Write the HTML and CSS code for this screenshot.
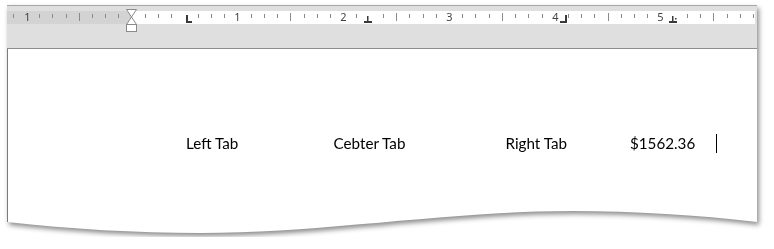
FILE: index.html
```html
<!DOCTYPE html>
<html lang="en">
<head>
    <meta charset="utf-8" />
    <meta name="viewport" content="width=device-width, initial-scale=1.0">
    <link rel="stylesheet" href="styles.css">
    <title>Tab Stops</title>
</head>
<body>
    <div class="doc">
        <div class="doc-header">
            <svg class="ruler" viewBox="7 11 748 13" width="748" height="13">
                <rect class="ruler-margin" x="7" y="11" width="125" height="13"/>
                <g class="ticks">
                    <rect x="13" y="14" width="1" height="4"/>
                    <rect x="39" y="14" width="1" height="4"/>
                    <rect x="52" y="14" width="1" height="4"/>
                    <rect x="66" y="14" width="1" height="4"/>
                    <rect x="79" y="13" width="1" height="8"/>
                    <rect x="92" y="14" width="1" height="4"/>
                    <rect x="105" y="14" width="1" height="4"/>
                    <rect x="118" y="14" width="1" height="4"/>
                    <rect x="145" y="14" width="1" height="4"/>
                    <rect x="158" y="14" width="1" height="4"/>
                    <rect x="171" y="14" width="1" height="4"/>
                    <rect x="198" y="14" width="1" height="4"/>
                    <rect x="211" y="14" width="1" height="4"/>
                    <rect x="224" y="14" width="1" height="4"/>
                    <rect x="251" y="14" width="1" height="4"/>
                    <rect x="264" y="14" width="1" height="4"/>
                    <rect x="277" y="14" width="1" height="4"/>
                    <rect x="290" y="13" width="1" height="8"/>
                    <rect x="304" y="14" width="1" height="4"/>
                    <rect x="317" y="14" width="1" height="4"/>
                    <rect x="330" y="14" width="1" height="4"/>
                    <rect x="356" y="14" width="1" height="4"/>
                    <rect x="383" y="14" width="1" height="4"/>
                    <rect x="396" y="13" width="1" height="8"/>
                    <rect x="409" y="14" width="1" height="4"/>
                    <rect x="423" y="14" width="1" height="4"/>
                    <rect x="436" y="14" width="1" height="4"/>
                    <rect x="462" y="14" width="1" height="4"/>
                    <rect x="475" y="14" width="1" height="4"/>
                    <rect x="489" y="14" width="1" height="4"/>
                    <rect x="502" y="13" width="1" height="8"/>
                    <rect x="515" y="14" width="1" height="4"/>
                    <rect x="528" y="14" width="1" height="4"/>
                    <rect x="542" y="14" width="1" height="4"/>
                    <rect x="568" y="14" width="1" height="4"/>
                    <rect x="581" y="14" width="1" height="4"/>
                    <rect x="594" y="14" width="1" height="4"/>
                    <rect x="608" y="13" width="1" height="8"/>
                    <rect x="621" y="14" width="1" height="4"/>
                    <rect x="634" y="14" width="1" height="4"/>
                    <rect x="647" y="14" width="1" height="4"/>
                    <rect x="687" y="14" width="1" height="4"/>
                    <rect x="700" y="14" width="1" height="4"/>
                    <rect x="713" y="13" width="1" height="8"/>
                    <rect x="727" y="14" width="1" height="4"/>
                    <rect x="740" y="14" width="1" height="4"/>
                    <rect x="753" y="14" width="1" height="4"/>
                </g>
                <g class="nums">
                    <text x="27.5" y="21">1</text>
                    <text x="237.5" y="21">1</text>
                    <text x="343.5" y="21">2</text>
                    <text x="449.5" y="21">3</text>
                    <text x="555.5" y="21">4</text>
                    <text x="660.5" y="21">5</text>
                </g>
                <g class="tabs">
                    <!-- left -->
                    <rect x="186" y="15" width="2" height="8"/>
                    <rect x="186" y="21" width="6" height="2"/>
                    <!-- center -->
                    <rect x="367" y="16" width="1.5" height="6"/>
                    <rect x="364" y="21" width="8" height="2"/>
                    <!-- right -->
                    <rect x="565" y="15" width="2" height="8"/>
                    <rect x="560" y="21" width="7" height="2"/>
                    <!-- decimal -->
                    <rect x="672" y="16" width="1.5" height="6"/>
                    <rect x="669" y="21" width="8" height="2"/>
                    <rect x="675" y="18" width="1.5" height="1.5"/>
                </g>
                <g class="indent">
                    <polygon points="126.5,9.5 136.5,9.5 131.5,17"/>
                    <polygon points="131.5,17 136.5,24.5 126.5,24.5"/>
                    <rect x="126.5" y="24.5" width="10" height="7"/>
                </g>
            </svg>
        </div>

        <div class="page">
            <div class="line">
                <span class="gap"></span>
                <span class="c-left">Left Tab</span>
                <span class="c-center">Cebter Tab</span>
                <span class="c-right">Right Tab</span>
                <span class="c-int">$1562</span>
                <span class="c-frac">.36</span>
                <span class="caret"></span>
            </div>
        </div>

        <svg class="page-edge" viewBox="0 0 750 32" width="750" height="32">
            <path d="M0,0 L750,0 L750,17 C690,10 628,6 566,6 C442,6 317,28 193,28 C129,28 64,24 0,17 Z"/>
            <line x1="0.5" y1="0" x2="0.5" y2="17"/>
        </svg>
    </div>
</body>
</html>
```

FILE: styles.css
```css
body {
    margin: 0;
    background-color: #fff;
    overflow: hidden;
}

.doc {
    margin: 5px 0 0 7px;
    width: 750px;
    filter: drop-shadow(2px 3px 2.5px rgba(0, 0, 0, 0.45));
}

.doc-header {
    background-color: #dfdfdf;
    border-top: 1px solid #a6a6a6;
    border-bottom: 1px solid #8e8e8e;
    padding: 5px 2px 24px 0;
}

.ruler {
    display: block;
    background-color: #fff;
    overflow: visible;
}

.ruler-margin {
    fill: #d3d3d3;
}

.ticks rect {
    fill: #8a8a8a;
}

.nums text {
    font-family: "Noto Sans", sans-serif;
    font-size: 11px;
    fill: #444;
    text-anchor: middle;
}

.tabs rect {
    fill: #3a3a3a;
}

.indent polygon,
.indent rect {
    fill: #fff;
    stroke: #8b8b8b;
    stroke-width: 1;
}

.page {
    box-sizing: border-box;
    height: 156px;
    padding-top: 85px;
    background-color: #fff;
    border-left: 1px solid #7b7b7b;
}

.line {
    display: flex;
    height: 19px;
    font-family: Lato, sans-serif;
    font-size: 15.2px;
    line-height: 19px;
    color: #000;
    white-space: nowrap;
}

.gap { width: 178px; }
.c-left { width: 118px; }
.c-center { width: 131px; text-align: center; }
.c-right { width: 132px; text-align: right; }
.c-int { width: 107px; text-align: right; }
.c-frac { width: 42px; }

.caret {
    width: 1px;
    height: 19px;
    background-color: #000;
}

.page-edge {
    display: block;
}

.page-edge path {
    fill: #fff;
}

.page-edge line {
    stroke: #7b7b7b;
    stroke-width: 1;
}
```
